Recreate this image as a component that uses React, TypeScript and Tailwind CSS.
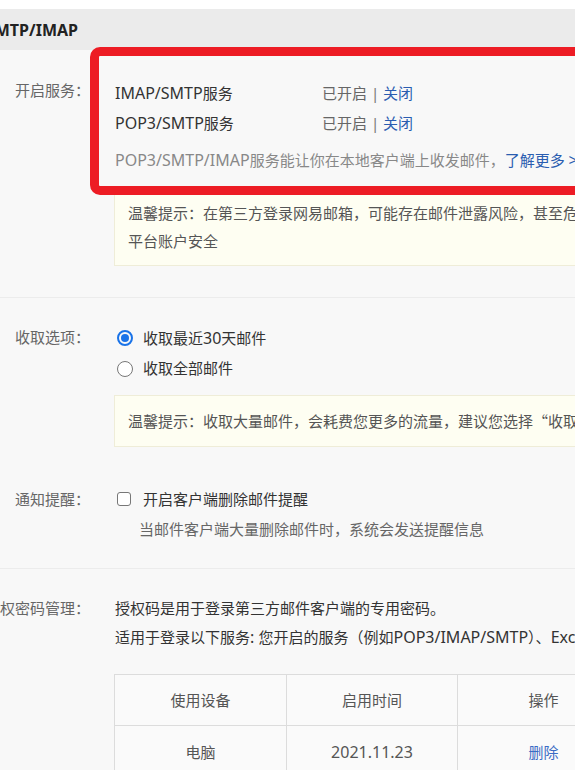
import React from "react";

const FONT = { fontFamily: '"Noto Sans", "Noto Sans CJK SC", sans-serif' };

function L({ children }: { children: React.ReactNode }) {
  return <span className="text-[16px]">{children}</span>;
}

function Label({ text, lh }: { text: string; lh: string }) {
  return (
    <div className={`w-[90px] shrink-0 flex justify-end whitespace-nowrap text-[#666] ${lh}`}>
      <span>{text}</span>
    </div>
  );
}

function Radio({ checked }: { checked: boolean }) {
  return checked ? (
    <span className="w-[16px] h-[16px] rounded-full border-[2px] border-[#1a73e8] flex items-center justify-center shrink-0">
      <span className="w-[8px] h-[8px] rounded-full bg-[#1a73e8]" />
    </span>
  ) : (
    <span className="w-[16px] h-[16px] rounded-full border-[1.5px] border-[#777] bg-white shrink-0" />
  );
}

export default function App() {
  return (
    <div
      className="relative w-[575px] h-[770px] overflow-hidden bg-[#f8f8f8] text-[15px] text-[#333]"
      style={FONT}
    >
      {/* top white strip + header */}
      <div className="h-[9px] bg-white" />
      <div className="h-[41px] bg-[#ebebeb] flex items-center">
        <div className="w-[78px] flex justify-end whitespace-nowrap">
          <span className="text-[16px] font-bold text-[#222]">POP3/SMTP/IMAP</span>
        </div>
      </div>

      {/* Section 1 */}
      <div className="flex pt-[25px] pb-[31px] border-b border-[#ececec]">
        <Label text="开启服务：" lh="leading-[30px]" />
        <div className="ml-[25px] flex-1 whitespace-nowrap">
          <div className="flex leading-[30px] pt-[3px]">
            <span className="w-[207px]">
              <L>IMAP/SMTP</L>服务
            </span>
            <span className="text-[#666]">
              已开启<span className="text-[#777]"> | </span><span className="text-[#2a5db0]">关闭</span>
            </span>
          </div>
          <div className="flex leading-[30px]">
            <span className="w-[207px]">
              <L>POP3/SMTP</L>服务
            </span>
            <span className="text-[#666]">
              已开启<span className="text-[#777]"> | </span><span className="text-[#2a5db0]">关闭</span>
            </span>
          </div>
          <div className="leading-[30px] mt-[7px] text-[#888]">
            <L>POP3/SMTP/IMAP</L>服务能让你在本地客户端上收发邮件，
            <span className="text-[#2a5db0]">
              了解更多 <L>&gt;</L>
            </span>
          </div>
          <div className="mt-[15px] -ml-px w-[560px] bg-[#fefef2] border border-[#efedd8] pl-[13px] pt-[8px] pb-[10px] leading-[28px] text-[#555]">
            <div>温馨提示：在第三方登录网易邮箱，可能存在邮件泄露风险，甚至危害第三方</div>
            <div>平台账户安全</div>
          </div>
        </div>
      </div>

      {/* Section 2 */}
      <div className="flex pt-[24px]">
        <Label text="收取选项：" lh="leading-[30px]" />
        <div className="ml-[25px] flex-1 whitespace-nowrap">
          <div className="flex items-center h-[31px] pl-[2px]">
            <Radio checked />
            <span className="ml-[10px]">
              收取最近<L>30</L>天邮件
            </span>
          </div>
          <div className="flex items-center h-[31px] pl-[2px]">
            <Radio checked={false} />
            <span className="ml-[10px]">收取全部邮件</span>
          </div>
          <div className="mt-[11px] -ml-px w-[560px] bg-[#fefef2] border border-[#efedd8] pl-[13px] py-[11px] leading-[28px] text-[#555]">
            温馨提示：收取大量邮件，会耗费您更多的流量，建议您选择
            <span className="font-['Noto_Sans_CJK_SC']">“</span>收取最近<L>30</L>天邮件
            <span className="font-['Noto_Sans_CJK_SC']">”</span>
          </div>
        </div>
      </div>

      {/* Section 3 */}
      <div className="flex pt-[37px] pb-[24px] border-b border-[#ececec]">
        <Label text="通知提醒：" lh="leading-[30px]" />
        <div className="ml-[25px] flex-1 whitespace-nowrap">
          <div className="flex items-center h-[30px] pl-[2px]">
            <span className="w-[14px] h-[14px] rounded-[3px] border-[1.5px] border-[#777] bg-white shrink-0" />
            <span className="ml-[12px]">开启客户端删除邮件提醒</span>
          </div>
          <div className="leading-[30px] pl-[24px] text-[#666]">
            当邮件客户端大量删除邮件时，系统会发送提醒信息
          </div>
        </div>
      </div>

      {/* Section 4 */}
      <div className="flex pt-[25px]">
        <Label text="授权密码管理：" lh="leading-[29px]" />
        <div className="ml-[25px] flex-1 whitespace-nowrap">
          <div className="leading-[29px]">授权码是用于登录第三方邮件客户端的专用密码。</div>
          <div className="leading-[29px]">
            适用于登录以下服务<L>: </L>您开启的服务（例如<L>POP3/IMAP/SMTP</L>）、<L>Exchange/CardDAV/CalDAV</L>服务
          </div>
          <div className="mt-[22px] -ml-px w-[516px] border border-[#dcdcdc] bg-[#fafafa] text-[#555]">
            <div className="grid grid-cols-[172px_171px_171px] h-[51px] border-b border-[#dcdcdc]">
              <div className="flex items-center justify-center border-r border-[#dcdcdc]">使用设备</div>
              <div className="flex items-center justify-center border-r border-[#dcdcdc]">启用时间</div>
              <div className="flex items-center justify-center">操作</div>
            </div>
            <div className="grid grid-cols-[172px_171px_171px] h-[52px]">
              <div className="flex items-center justify-center border-r border-[#dcdcdc]">电脑</div>
              <div className="flex items-center justify-center border-r border-[#dcdcdc]">
                <L>2021.11.23</L>
              </div>
              <div className="flex items-center justify-center text-[#3b6cc4]">删除</div>
            </div>
          </div>
        </div>
      </div>

      {/* red annotation box */}
      <div className="absolute left-[90px] top-[47px] w-[540px] h-[148px] border-[9px] border-[#ed1c24] rounded-[10px] pointer-events-none" />
    </div>
  );
}
